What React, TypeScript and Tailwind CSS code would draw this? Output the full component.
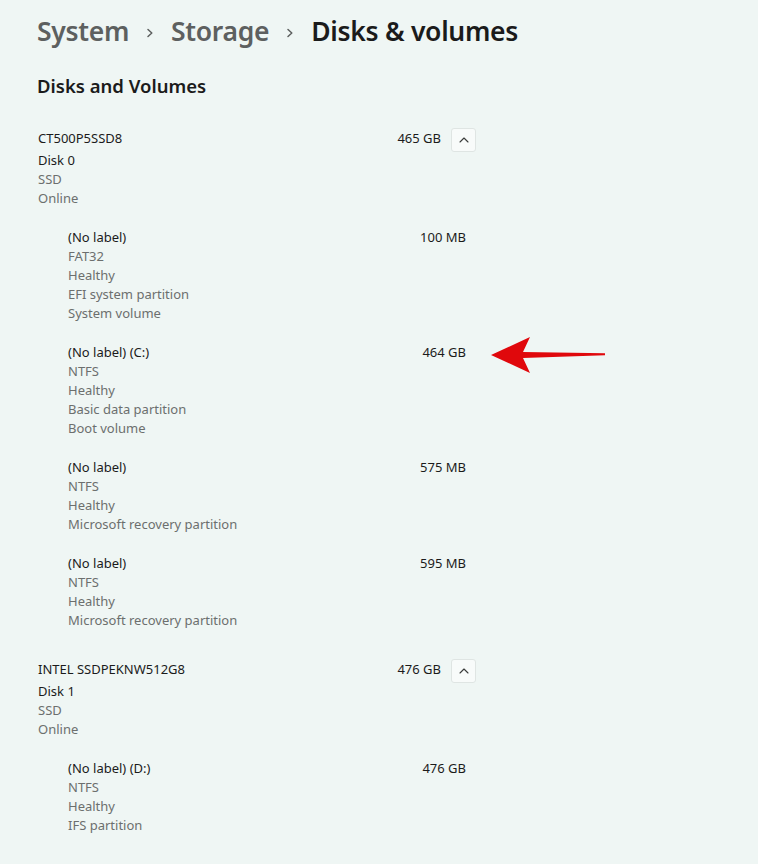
import React from "react";

type Partition = { lines: string[]; size: string };
type Disk = { name: string; num: string; size: string; partitions: Partition[] };

const disks: Disk[] = [
  {
    name: "CT500P5SSD8",
    num: "Disk 0",
    size: "465 GB",
    partitions: [
      { lines: ["(No label)", "FAT32", "Healthy", "EFI system partition", "System volume"], size: "100 MB" },
      { lines: ["(No label) (C:)", "NTFS", "Healthy", "Basic data partition", "Boot volume"], size: "464 GB" },
      { lines: ["(No label)", "NTFS", "Healthy", "Microsoft recovery partition"], size: "575 MB" },
      { lines: ["(No label)", "NTFS", "Healthy", "Microsoft recovery partition"], size: "595 MB" },
    ],
  },
  {
    name: "INTEL SSDPEKNW512G8",
    num: "Disk 1",
    size: "476 GB",
    partitions: [{ lines: ["(No label) (D:)", "NTFS", "Healthy", "IFS partition"], size: "476 GB" }],
  },
];

function Chevron() {
  return (
    <svg width="8" height="10" viewBox="0 0 8 10" className="mx-[17px] mt-[3px] shrink-0">
      <path d="M2 1.5 L5.8 5 L2 8.5" fill="none" stroke="#5d605f" strokeWidth="1.5" strokeLinecap="round" strokeLinejoin="round" />
    </svg>
  );
}

function UpButton() {
  return (
    <div className="w-[25px] h-[24px] bg-[#f8fbfa] border border-[#dfe5e3] rounded-[3px] flex items-center justify-center">
      <svg width="10" height="6" viewBox="0 0 10 6">
        <path d="M1 5 L5 1 L9 5" fill="none" stroke="#3a3c3b" strokeWidth="1.1" strokeLinecap="round" strokeLinejoin="round" />
      </svg>
    </div>
  );
}

function PartitionRow({ p }: { p: Partition }) {
  return (
    <div className="flex justify-between items-start pl-[30px] pr-[10px]">
      <div className="flex flex-col">
        {p.lines.map((l, i) => (
          <div key={i} className={i === 0 ? "text-[#1b1b1b]" : "text-[#6c6f6e]"}>
            {l}
          </div>
        ))}
      </div>
      <div className="text-[#1b1b1b]">{p.size}</div>
    </div>
  );
}

function DiskBlock({ d }: { d: Disk }) {
  return (
    <div className="flex flex-col">
      <div className="flex justify-between items-start">
        <div className="flex flex-col">
          <div className="text-[#1b1b1b] mb-[3px]">{d.name}</div>
          <div className="text-[#1b1b1b]">{d.num}</div>
          <div className="text-[#6c6f6e]">SSD</div>
          <div className="text-[#6c6f6e]">Online</div>
        </div>
        <div className="flex items-start gap-[10px]">
          <div className="text-[#1b1b1b]">{d.size}</div>
          <div className="-mt-[1px]">
            <UpButton />
          </div>
        </div>
      </div>
      <div className="flex flex-col gap-[20px] mt-[20px]">
        {d.partitions.map((p, i) => (
          <PartitionRow key={i} p={p} />
        ))}
      </div>
    </div>
  );
}

export default function App() {
  return (
    <div
      className="relative min-h-screen w-full bg-[#eff6f4] text-[13px] leading-[19px]"
      style={{ fontFamily: '"Noto Sans", "Open Sans", sans-serif' }}
    >
      <div className="pl-[37px] pt-[11px]">
        <div className="flex items-center h-[40px] text-[26.5px] font-semibold tracking-[-0.3px] whitespace-nowrap">
          <span className="text-[#5d605f]">System</span>
          <Chevron />
          <span className="text-[#5d605f]">Storage</span>
          <Chevron />
          <span className="text-[#1b1b1b]">Disks &amp; volumes</span>
        </div>
        <div className="mt-[23px] text-[18.5px] leading-[24px] font-semibold text-[#1b1b1b]">Disks and Volumes</div>
        <div className="mt-[31px] pl-[1px] w-[439px] flex flex-col gap-[30px]">
          {disks.map((d, i) => (
            <DiskBlock key={i} d={d} />
          ))}
        </div>
      </div>
      <svg className="absolute left-[488px] top-[334px]" width="120" height="42" viewBox="0 0 120 42">
        <path d="M3 21 L42 3 L35 18 L117 19.2 L117 21.2 L35 24 L42 39 Z" fill="#e0080c" strokeLinejoin="round" />
      </svg>
    </div>
  );
}
